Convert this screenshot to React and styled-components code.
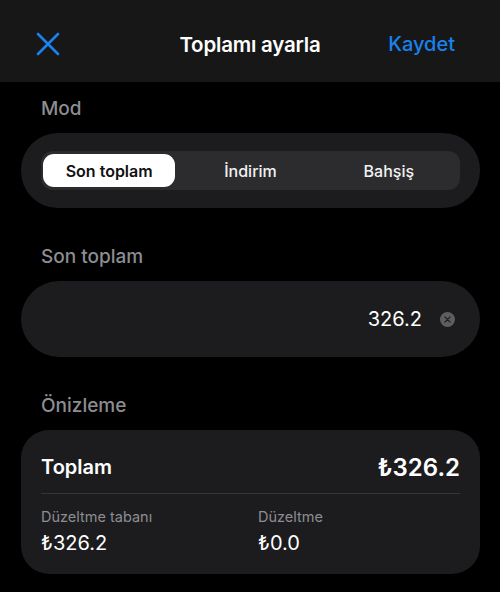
import React from "react"
import styled, { createGlobalStyle } from "styled-components"

const GlobalStyle = createGlobalStyle`
  html, body {
    margin: 0;
    padding: 0;
    background: #000;
  }
  body {
    font-family: Inter, "Noto Sans", "DejaVu Sans", sans-serif;
    color: #fff;
    -webkit-font-smoothing: antialiased;
  }
`

const modes = ["Son toplam", "İndirim", "Bahşiş"]

export default function App() {
  return (
    <Page>
      <GlobalStyle />
      <Header>
        <IconButton aria-label="Kapat">
          <svg width="24" height="24" viewBox="0 0 24 24" fill="none">
            <path d="M2 2 L22 22 M22 2 L2 22" stroke="#1a82f0" strokeWidth="2.6" strokeLinecap="round" />
          </svg>
        </IconButton>
        <Title>Toplamı ayarla</Title>
        <SaveButton>Kaydet</SaveButton>
      </Header>

      <Content>
        <SectionLabel>Mod</SectionLabel>
        <Card $radius="37px" $padding="18px 20px">
          <Segmented>
            {modes.map((m, i) => (
              <Segment key={m} $active={i === 0}>{m}</Segment>
            ))}
          </Segmented>
        </Card>

        <SectionLabel>Son toplam</SectionLabel>
        <InputCard>
          <Value>326.2</Value>
          <ClearButton aria-label="Temizle">
            <svg width="7" height="7" viewBox="0 0 8 8">
              <path d="M1 1 L7 7 M7 1 L1 7" stroke="#1c1c1e" strokeWidth="1.4" strokeLinecap="round" />
            </svg>
          </ClearButton>
        </InputCard>

        <SectionLabel>Önizleme</SectionLabel>
        <Card $radius="28px" $padding="0 20px">
          <TotalRow>
            <TotalLabel>Toplam</TotalLabel>
            <TotalValue>₺326.2</TotalValue>
          </TotalRow>
          <Divider />
          <Details>
            <Detail>
              <DetailLabel>Düzeltme tabanı</DetailLabel>
              <DetailValue>₺326.2</DetailValue>
            </Detail>
            <Detail>
              <DetailLabel>Düzeltme</DetailLabel>
              <DetailValue>₺0.0</DetailValue>
            </Detail>
          </Details>
        </Card>
      </Content>
    </Page>
  )
}

const Page = styled.div`
  width: 500px;
  height: 592px;
  overflow: hidden;
  background: #000;
`

const Header = styled.div`
  height: 82px;
  background: #171717;
  display: grid;
  grid-template-columns: 1fr auto 1fr;
  align-items: center;
  padding: 6px 36px 0 36px;
  box-sizing: border-box;
`

const IconButton = styled.button`
  background: none;
  border: none;
  padding: 0;
  justify-self: start;
  display: flex;
`

const Title = styled.div`
  font-size: 20.5px;
  font-weight: 600;
  letter-spacing: -0.2px;
`

const SaveButton = styled.button`
  justify-self: end;
  margin-right: 9px;
  background: none;
  border: none;
  padding: 0;
  color: #1a82f0;
  font-family: inherit;
  font-size: 20px;
  font-weight: 500;
`

const Content = styled.div`
  padding: 14px 20px 0 21px;
  display: flex;
  flex-direction: column;
`

const SectionLabel = styled.div`
  color: #8d8d92;
  font-size: 19px;
  font-weight: 500;
  padding-left: 20px;
  height: 26px;
  line-height: 26px;
  margin-bottom: 11px;

  &:not(:first-child) {
    margin-top: 36px;
  }
`

const Card = styled.div`
  background: #1c1c1e;
  border-radius: ${p => p.$radius};
  padding: ${p => p.$padding};
`

const Segmented = styled.div`
  display: grid;
  grid-template-columns: repeat(3, 1fr);
  background: #2c2c2f;
  border-radius: 12px;
  padding: 3px 2px;
  height: 39px;
  box-sizing: border-box;
`

const Segment = styled.div`
  display: flex;
  align-items: center;
  justify-content: center;
  border-radius: 11px;
  font-size: 16px;
  font-weight: ${p => (p.$active ? 600 : 500)};
  color: ${p => (p.$active ? "#111" : "#f2f2f2")};
  background: ${p => (p.$active ? "#fff" : "transparent")};
  margin-right: ${p => (p.$active ? "6px" : "0")};
`

const InputCard = styled.div`
  background: #1c1c1e;
  border-radius: 38px;
  height: 76px;
  display: flex;
  align-items: center;
  justify-content: flex-end;
  gap: 18px;
  padding: 0 25px 0 20px;
`

const Value = styled.div`
  font-size: 20px;
  font-weight: 400;
`

const ClearButton = styled.span`
  width: 15px;
  height: 15px;
  border-radius: 50%;
  background: #5d5d62;
  display: flex;
  align-items: center;
  justify-content: center;
`

const TotalRow = styled.div`
  height: 63px;
  display: flex;
  align-items: center;
  justify-content: space-between;
  padding-top: 11px;
  box-sizing: border-box;
`

const TotalLabel = styled.div`
  font-size: 20px;
  font-weight: 600;
`

const TotalValue = styled.div`
  font-size: 24px;
  font-weight: 600;
`

const Divider = styled.div`
  height: 1px;
  background: #353538;
`

const Details = styled.div`
  display: grid;
  grid-template-columns: 217px 1fr;
  padding: 14px 0 19px;
`

const Detail = styled.div`
  display: flex;
  flex-direction: column;
  gap: 6px;
`

const DetailLabel = styled.div`
  color: #8d8d92;
  font-size: 14.5px;
`

const DetailValue = styled.div`
  font-size: 20px;
`
